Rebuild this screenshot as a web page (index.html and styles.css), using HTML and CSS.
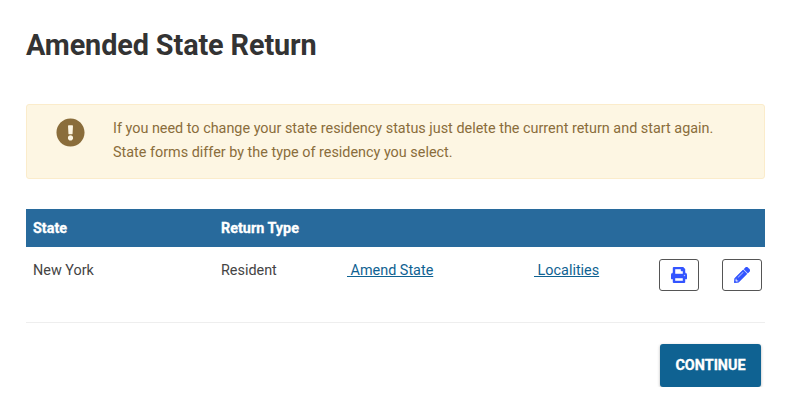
FILE: index.html
```html
<!DOCTYPE html>
<html lang="en">
<head>
  <meta charset="UTF-8">
  <title>Amended State Return</title>
  <link rel="stylesheet" href="styles.css">
</head>
<body>

  <h1 class="page-title">Amended State Return</h1>

  <!-- residency notice -->
  <div class="notice">
    <div class="notice-icon">
      <svg viewBox="0 0 512 512" width="29" height="29"><path fill="#8a6d3b" d="M504 256c0 136.997-111.043 248-248 248S8 392.997 8 256C8 119.083 119.043 8 256 8s248 111.083 248 248zm-248 50c-25.405 0-46 20.595-46 46s20.595 46 46 46 46-20.595 46-46-20.595-46-46-46zm-43.673-165.346l7.418 136c.347 6.364 5.609 11.346 11.982 11.346h48.546c6.373 0 11.635-4.982 11.982-11.346l7.418-136c.375-6.874-5.098-12.654-11.982-12.654h-63.383c-6.884 0-12.356 5.78-11.981 12.654z"/></svg>
    </div>
    <p class="notice-text">If you need to change your state residency status just delete the current return and start again.<br>State forms differ by the type of residency you select.</p>
  </div>

  <table class="returns">
    <thead>
      <tr>
        <th class="col-state">State</th>
        <th class="col-type">Return Type</th>
        <th class="col-amend"></th>
        <th class="col-local"></th>
        <th class="col-print"></th>
        <th></th>
      </tr>
    </thead>
    <tbody>
      <tr>
        <td>New York</td>
        <td>Resident</td>
        <td><a href="#">&nbsp;Amend State</a></td>
        <td><a href="#">&nbsp;Localities</a></td>
        <td>
          <button type="button" class="icon-btn">
            <svg viewBox="0 0 512 512" width="16" height="16"><path d="M448 192V77.25c0-8.49-3.37-16.62-9.37-22.63L393.37 9.37c-6-6-14.14-9.37-22.63-9.37H96C78.33 0 64 14.33 64 32v160c-35.35 0-64 28.65-64 64v112c0 8.84 7.16 16 16 16h48v96c0 17.67 14.33 32 32 32h320c17.67 0 32-14.33 32-32v-96h48c8.84 0 16-7.16 16-16V256c0-35.35-28.65-64-64-64zm-64 256H128v-96h256v96zm0-224H128V64h192v48c0 8.84 7.16 16 16 16h48v96zm48 72c-13.25 0-24-10.75-24-24 0-13.26 10.75-24 24-24s24 10.74 24 24c0 13.25-10.75 24-24 24z"/></svg>
          </button>
        </td>
        <td>
          <button type="button" class="icon-btn">
            <svg viewBox="0 0 512 512" width="16" height="16"><path d="M497.9 142.1l-46.1 46.1c-4.7 4.7-12.3 4.7-17 0l-111-111c-4.7-4.7-4.7-12.3 0-17l46.1-46.1c18.7-18.7 49.1-18.7 67.9 0l60.1 60.1c18.8 18.7 18.8 49.1 0 67.9zM284.2 99.8L21.6 362.4.4 483.9c-2.9 16.4 11.4 30.6 27.8 27.8l121.5-21.3 262.6-262.6c4.7-4.7 4.7-12.3 0-17l-111-111c-4.8-4.7-12.4-4.7-17.1 0zM124.1 339.9c-5.5-5.5-5.5-14.3 0-19.8l154-154c5.5-5.5 14.3-5.5 19.8 0s5.5 14.3 0 19.8l-154 154c-5.5 5.5-14.3 5.5-19.8 0zM88 424h48v36.3l-64.5 11.3-31.1-31.1L51.7 376H88v48z"/></svg>
          </button>
        </td>
      </tr>
    </tbody>
  </table>

  <div class="actions">
    <button type="button" class="continue-btn">CONTINUE</button>
  </div>

</body>
</html>
```

FILE: styles.css
```css
body {
  margin: 0;
  padding: 0 22px 0 26px;
  background: #fff;
  color: #444;
  font-family: Roboto, sans-serif;
  font-size: 14.4px;
}
.page-title {
  margin: 0;
  padding-top: 27px;
  height: 77px;
  box-sizing: border-box;
  font-size: 28.8px;
  line-height: 36px;
  font-weight: 700;
  color: #333;
  letter-spacing: -0.1px;
}
.notice {
  display: flex;
  height: 75px;
  margin-top: 27px;
  box-sizing: border-box;
  background: #fdf6e3;
  border: 1px solid #fbeccb;
  border-radius: 3px;
}
.notice-icon {
  width: 86px;
  padding: 13px 0 0 29px;
  box-sizing: border-box;
}
.notice-text {
  margin: 12px 0 0;
  color: #8a6d3b;
  line-height: 24px;
}
.returns {
  width: 739px;
  margin-top: 30px;
  border-collapse: collapse;
  table-layout: fixed;
}
.returns th {
  box-sizing: border-box;
  height: 38px;
  padding: 0 0 0 7px;
  background: #286a9c;
  color: #fff;
  font-weight: 700;
  text-align: left;
  -webkit-text-stroke: 0.3px #fff;
}
.returns td {
  height: 75px;
  padding: 12px 0 0 7px;
  box-sizing: border-box;
  vertical-align: top;
  line-height: 24px;
  border-bottom: 1px solid #eee;
}
.col-state { width: 188px; }
.col-type { width: 126px; }
.col-amend { width: 187px; }
.col-local { width: 125px; }
.col-print { width: 63px; }
.returns a {
  color: #0f6292;
}
.icon-btn {
  display: flex;
  align-items: center;
  justify-content: center;
  width: 40px;
  height: 32px;
  padding: 0;
  background: #fff;
  border: 1px solid #555;
  border-radius: 3px;
}
.icon-btn svg {
  fill: #3355ff;
  stroke: #3355ff;
  stroke-width: 14px;
}
.actions {
  display: flex;
  justify-content: flex-end;
  padding: 21px 4px 0 0;
}
.continue-btn {
  width: 101px;
  height: 43px;
  padding: 0;
  background: #0f6292;
  color: #fff;
  border: none;
  border-radius: 3px;
  box-shadow: 0 1px 3px rgba(0, 0, 0, 0.3);
  font-family: Roboto, sans-serif;
  font-size: 14.4px;
  font-weight: 700;
  -webkit-text-stroke: 0.3px #fff;
}
```
